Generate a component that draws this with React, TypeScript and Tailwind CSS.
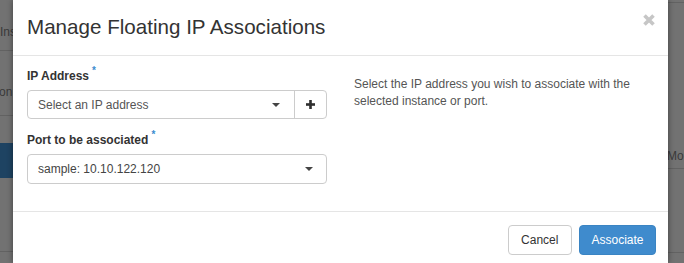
import React from 'react';

function Caret() {
    return <span className="w-0 h-0 border-l-[4px] border-r-[4px] border-t-[4px] border-l-transparent border-r-transparent border-t-[#444]" />;
}

function Label({ text }: { text: string }) {
    return (
        <div className="text-[12px] leading-[17px] font-bold text-[#333] mb-[5px] flex items-start">
            {text}
            <span className="text-[#3c8dcf] text-[10px] leading-[10px] ml-[3px] -mt-[2px]">*</span>
        </div>
    );
}

export default function App() {
    return (
        <div className="w-[684px] h-[263px] overflow-hidden flex bg-[#727272] font-['Liberation_Sans',Arial,sans-serif]">
            {/* page behind the backdrop, left side */}
            <div className="w-[13px] shrink-0 overflow-hidden flex flex-col text-[12px] leading-[14px] text-[#3a3a3a]">
                <div className="h-[51px] border-b border-[#626262] pt-[25px] whitespace-nowrap">Ins</div>
                <div className="h-[65px] border-b border-[#626262] pt-[34px] -ml-[1px] whitespace-nowrap">on</div>
                <div className="h-[27px]" />
                <div className="h-[35px] bg-[#1e4362]" />
                <div className="h-[74px] border-b border-[#626262]" />
            </div>

            {/* modal */}
            <div className="w-[655px] shrink-0 bg-white shadow-[0_0_6px_rgba(0,0,0,0.45)] relative z-10 flex flex-col">
                <div className="h-[56px] border-b border-[#e5e5e5] px-[14px] pt-[15px] flex justify-between">
                    <h4 className="text-[20.6px] leading-[23px] text-[#333]">Manage Floating IP Associations</h4>
                    <button className="mt-[-1px] mr-[-1px] h-[12px] w-[12px]">
                        <svg width="12" height="12" viewBox="0 0 12 12">
                            <path d="M1.5 1.5 L10.5 10.5 M10.5 1.5 L1.5 10.5" stroke="#c6c6c6" strokeWidth="3.6" />
                        </svg>
                    </button>
                </div>

                <div className="h-[156px] border-b border-[#e5e5e5] px-[14px] pt-[12px] flex">
                    <div className="w-[300px] shrink-0">
                        <Label text="IP Address" />
                        <div className="flex h-[29px] border border-[#ccc] rounded-[4px]">
                            <div className="flex-1 flex items-center justify-between pl-[10px] pr-[14px] text-[12px] text-[#555]">
                                <span>Select an IP address</span>
                                <Caret />
                            </div>
                            <div className="w-[32px] border-l border-[#ccc] flex items-center justify-center">
                                <svg width="9" height="9" viewBox="0 0 9 9">
                                    <rect x="0" y="3.2" width="9" height="2.6" fill="#2f2f2f" />
                                    <rect x="3.2" y="0" width="2.6" height="9" fill="#2f2f2f" />
                                </svg>
                            </div>
                        </div>

                        <div className="mt-[13px]">
                            <Label text="Port to be associated" />
                            <div className="h-[30px] border border-[#ccc] rounded-[4px] flex items-center justify-between pl-[10px] pr-[13px] text-[12px] text-[#444]">
                                <span>sample: 10.10.122.120</span>
                                <Caret />
                            </div>
                        </div>
                    </div>
                    <p className="pl-[27px] pt-[8px] text-[12px] leading-[17px] text-[#555] w-[320px]">
                        Select the IP address you wish to associate with the selected instance or port.
                    </p>
                </div>

                <div className="px-[12px] pt-[13px] flex justify-end gap-[7px]">
                    <button className="h-[30px] px-[12.5px] border border-[#ccc] rounded-[4px] text-[12px] text-[#333] bg-white">Cancel</button>
                    <button className="h-[30px] px-[11.5px] border border-[#3a84c3] rounded-[4px] text-[12px] text-white bg-[#3f8bcd]">Associate</button>
                </div>
            </div>

            {/* page behind the backdrop, right side */}
            <div className="flex-1 overflow-hidden flex flex-col text-[12px] leading-[14px] text-[#3a3a3a]">
                <div className="h-[3px] border-b border-[#626262]" />
                <div className="h-[166px] border-b border-[#626262] pt-[146px] -ml-[1px] whitespace-nowrap">Mor</div>
                <div className="h-[84px] border-b border-[#626262]" />
            </div>
        </div>
    );
}
